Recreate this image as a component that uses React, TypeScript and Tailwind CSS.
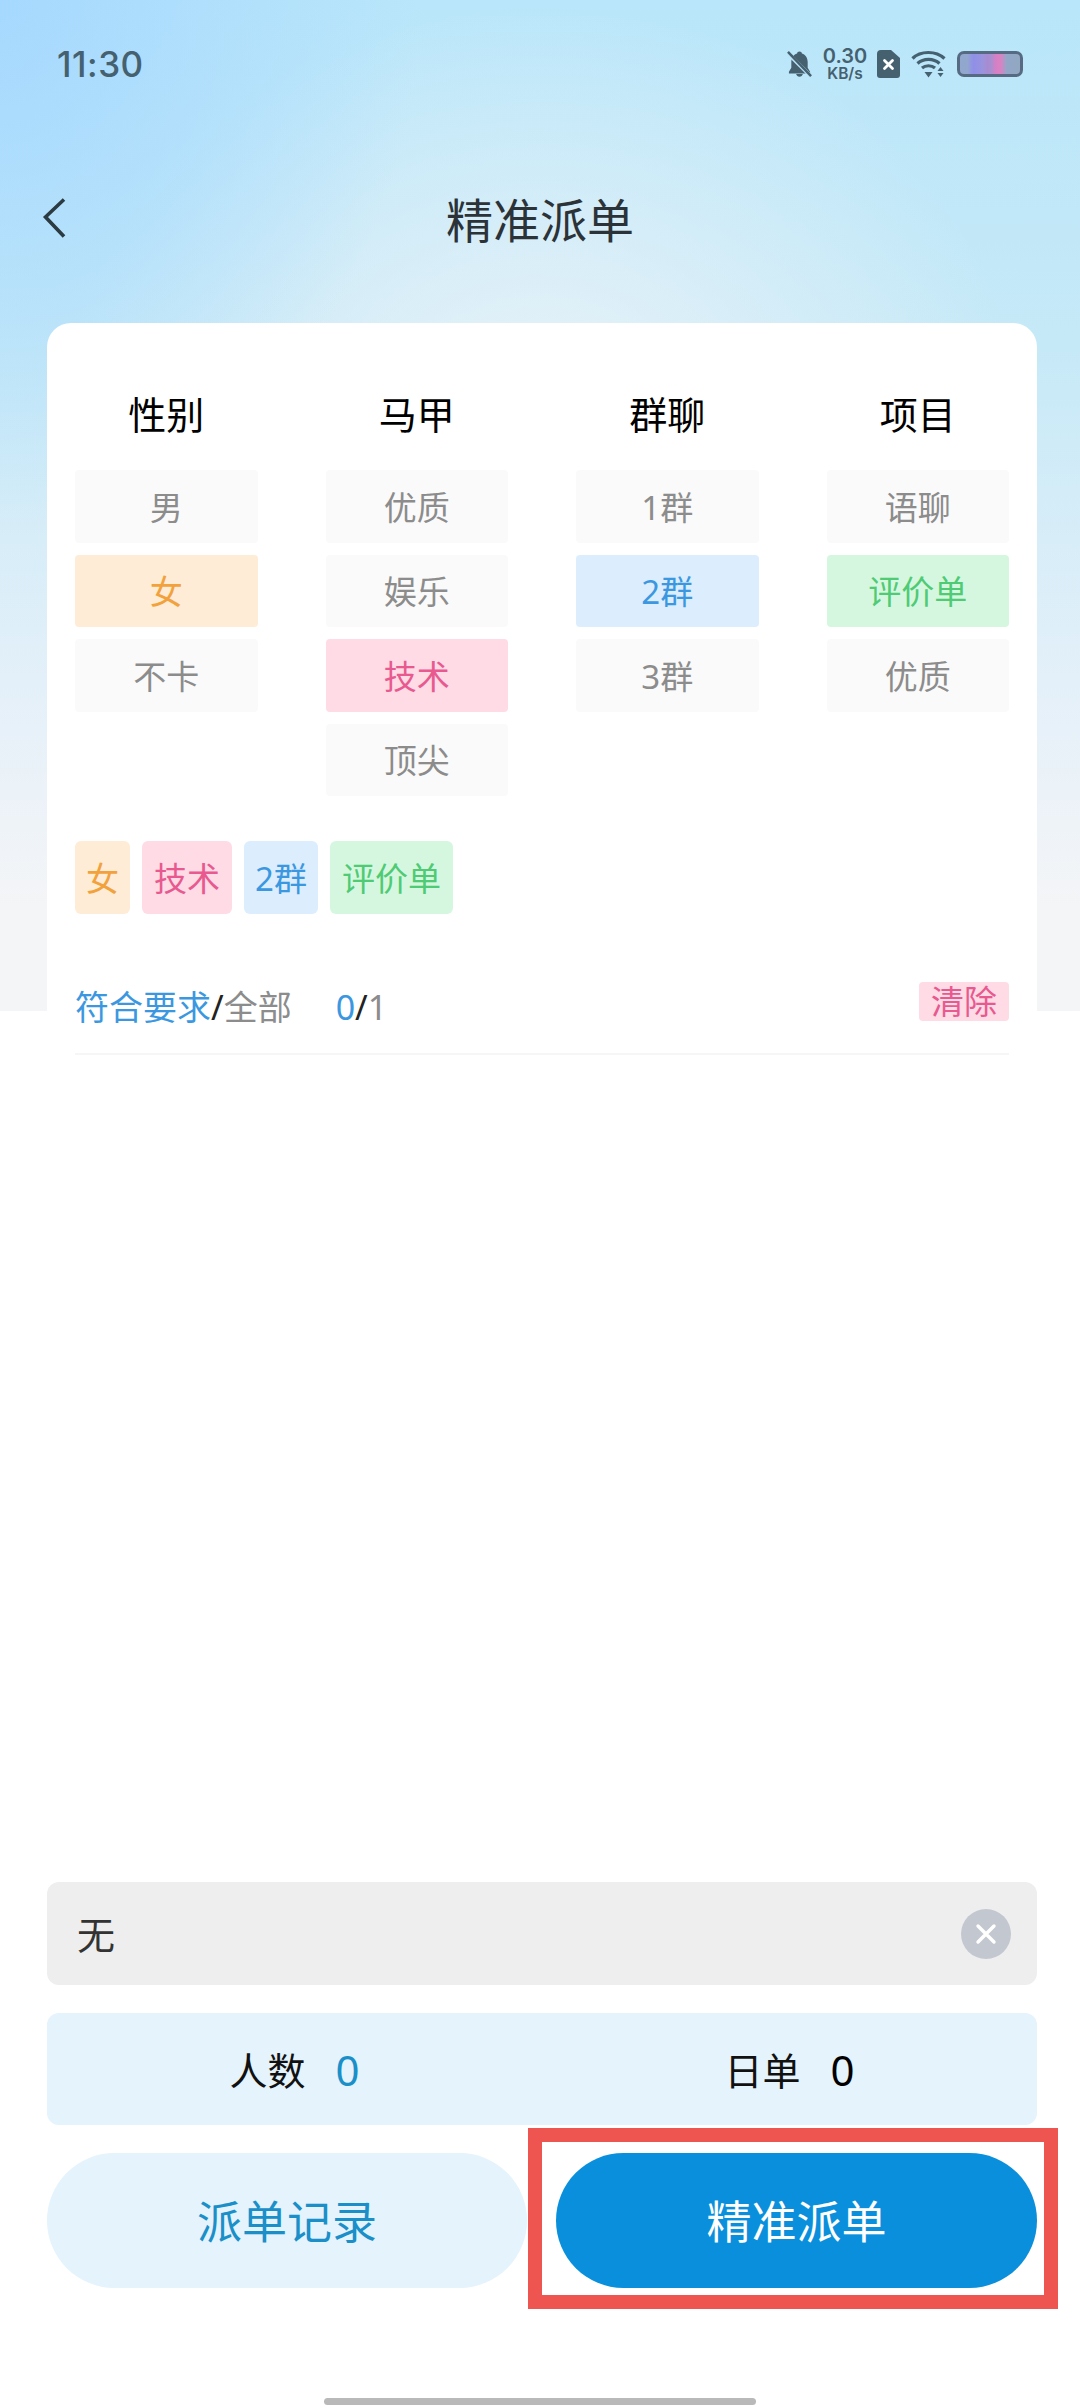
const CJK = "font-['Noto_Sans','Noto_Sans_CJK_SC',sans-serif]";

type Opt = { label: string; on?: string };

const columns: { title: string; items: Opt[] }[] = [
  { title: "性别", items: [{ label: "男" }, { label: "女", on: "bg-[#ffecd6] text-[#f2a23c]" }, { label: "不卡" }] },
  { title: "马甲", items: [{ label: "优质" }, { label: "娱乐" }, { label: "技术", on: "bg-[#ffdbe6] text-[#e8598f]" }, { label: "顶尖" }] },
  { title: "群聊", items: [{ label: "1群" }, { label: "2群", on: "bg-[#dcedfe] text-[#3b98e0]" }, { label: "3群" }] },
  { title: "项目", items: [{ label: "语聊" }, { label: "评价单", on: "bg-[#d6f7df] text-[#4ecb74]" }, { label: "优质" }] },
];

function StatusIcons() {
  return (
    <div className="flex items-center">
      <svg width="25" height="28" viewBox="0 0 26 28" className="mr-[10px]">
        <path d="M13 1c-1.500 0-2.400.9-2.500 2C6.500 4.200 4.500 8 4.500 12v6L2 22v2h22v-2l-2.500-4v-6c0-4-2-7.800-6-9C15.400 1.900 14.500 1 13 1z" fill="#45606f" />
        <path d="M9.500 24.500c.4 1.700 1.800 2.800 3.500 2.800s3.100-1.100 3.500-2.800z" fill="#45606f" />
        <path d="M1 3l24 24" stroke="#b9e5f9" strokeWidth="4" />
        <path d="M1 1.500l24 25" stroke="#45606f" strokeWidth="2.600" />
      </svg>
      <div className="flex w-[46px] flex-col items-center font-['Inter',sans-serif] font-semibold text-[#45606f]">
        <span className="text-[20px] leading-[20px]">0.30</span>
        <span className="text-[15.500px] leading-[16px]">KB/s</span>
      </div>
      <svg width="23" height="28" viewBox="0 0 23 28" className="ml-[9px]">
        <path d="M4 0h10l9 8v17a3 3 0 0 1-3 3H3a3 3 0 0 1-3-3V4a4 4 0 0 1 4-4z" fill="#45606f" />
        <path d="M7.500 10.500l8 8M15.500 10.500l-8 8" stroke="#fff" strokeWidth="2.800" strokeLinecap="round" />
      </svg>
      <svg width="36" height="28" viewBox="0 0 36 28" className="ml-[11px]">
        <g fill="none" stroke="#45606f" strokeWidth="3.200">
          <path d="M1.500 8.500C9.500 .5 25 .5 33.500 8.500" />
          <path d="M6.500 13.500c6-5.500 16-5.500 22 0" />
          <path d="M11 18c3.500-3 9.500-3 13 0" />
        </g>
        <path d="M13.500 22h8l-4 5.500z" fill="#45606f" />
        <path d="M29.500 17l3 4h-6zM29.500 27l3-4h-6z" fill="#45606f" />
      </svg>
      <div className="ml-[10px] h-[26px] w-[66px] rounded-[7px] border-[3px] border-[#566b83] bg-[linear-gradient(90deg,#92a7cd_0%,#92a7cd_12%,#8f8fe8_22%,#9a94dc_38%,#a78bd2_45%,#a88fd0_52%,#d77fc4_60%,#d883c4_68%,#92a7c8_78%,#92a7c0_100%)]" />
    </div>
  );
}

export default function App() {
  return (
    <div
      className={`relative flex h-[2408px] w-[1080px] flex-col overflow-hidden bg-white bg-[radial-gradient(ellipse_420px_520px_at_0%_0%,rgba(165,216,255,0.95)_0%,rgba(165,216,255,0)_100%),radial-gradient(ellipse_480px_420px_at_50%_42%,#e8f2f8_0%,rgba(232,242,248,0)_100%),linear-gradient(180deg,#b9e6fa_0%,#c6e9f7_34%,#e4f0f9_68%,#f4f5f7_90%,#f4f5f7_100%)] bg-[length:100%_1011px] bg-no-repeat ${CJK}`}
    >
      <div className="flex h-[128px] shrink-0 items-center justify-between pl-[57px] pr-[57px]">
        <span className="font-['Inter',sans-serif] text-[35px] font-medium leading-none tracking-[0.5px] text-[#45606f]">11:30</span>
        <StatusIcons />
      </div>

      <div className="relative flex h-[188px] shrink-0 items-center justify-center">
        <svg width="26" height="42" viewBox="0 0 26 42" className="absolute left-[41px] top-[69px]">
          <path d="M23 2.500L4.500 20 23 39.500" fill="none" stroke="#2c3a41" strokeWidth="3.600" />
        </svg>
        <span className="mb-[3px] text-[47px] leading-none text-[#2b3338]">精准派单</span>
      </div>

      <div className="ml-[47px] mt-[7px] w-[990px] shrink-0 rounded-t-[24px] bg-white px-[28px] pt-[62px]">
        <div className="grid grid-cols-4 gap-x-[68px]">
          {columns.map((c) => (
            <div key={c.title} className="flex flex-col gap-[12px]">
              <div className="mb-[13px] h-[60px] text-center text-[38px] leading-[58px] text-black">{c.title}</div>
              {c.items.map((o) => (
                <div
                  key={o.label}
                  className={`flex h-[72.500px] items-center justify-center rounded-[4px] pt-[2px] text-[33px] leading-none ${o.on ?? "bg-[#fafafa] text-[#8c8c8c]"}`}
                >
                  {o.label}
                </div>
              ))}
            </div>
          ))}
        </div>

        <div className="mt-[45px] flex gap-[12px]">
          <span className="flex h-[73px] items-center rounded-[6px] bg-[#ffecd6] px-[11px] pt-[2px] text-[33px] text-[#f2a23c]">女</span>
          <span className="flex h-[73px] items-center rounded-[6px] bg-[#ffdbe6] px-[12px] pt-[2px] text-[33px] text-[#e8598f]">技术</span>
          <span className="flex h-[73px] items-center rounded-[6px] bg-[#dcedfe] px-[11px] pt-[2px] text-[33px] text-[#3b98e0]">2群</span>
          <span className="flex h-[73px] items-center rounded-[6px] bg-[#d6f7df] px-[12px] pt-[2px] text-[33px] text-[#4ecb74]">评价单</span>
        </div>

        <div className="mt-[68px] flex h-[73px] items-start justify-between border-b-[2px] border-[#f6f6f6]">
          <div className="mt-[1px] flex text-[34px] leading-[48px]">
            <span className="text-[#3b98e0]">符合要求</span>
            <span className="text-[#222]">/</span>
            <span className="text-[#8c8c8c]">全部</span>
            <span className="ml-[44px] text-[#3b98e0]">0</span>
            <span className="text-[#222]">/</span>
            <span className="text-[#8c8c8c]">1</span>
          </div>
          <span className="flex h-[39px] w-[90px] items-center justify-center rounded-[4px] bg-[#ffdbe6] text-[33px] leading-none text-[#e8598f]">清除</span>
        </div>
      </div>

      <div className="ml-[47px] mt-auto flex w-[990px] flex-col">
        <div className="flex h-[103px] items-center justify-between rounded-[12px] bg-[#eeeeee] pl-[30px] pr-[26px]">
          <span className="text-[38px] leading-none text-[#333]">无</span>
          <span className="flex h-[50px] w-[50px] items-center justify-center rounded-full bg-[#c3c7cf]">
            <svg width="24" height="24" viewBox="0 0 24 24">
              <path d="M4 4l16 16M20 4L4 20" stroke="#fff" strokeWidth="3.400" strokeLinecap="round" />
            </svg>
          </span>
        </div>
        <div className="mt-[28px] grid h-[112px] grid-cols-2 rounded-[12px] bg-[#e4f3fc]">
          <div className="flex items-center justify-center gap-[30px] pt-[2px] text-[38px] leading-none text-[#111]">
            <span>人数</span>
            <span className="text-[42px] text-[#1a8fc8]">0</span>
          </div>
          <div className="flex items-center justify-center gap-[30px] pt-[2px] text-[38px] leading-none text-[#111]">
            <span>日单</span>
            <span className="text-[42px] text-black">0</span>
          </div>
        </div>
        <div className="mt-[28px] flex justify-between">
          <button className="flex h-[135px] w-[480px] items-center justify-center rounded-full bg-[#e4f3fc] pt-[2px] text-[45px] leading-none text-[#1a8fc8]">派单记录</button>
          <button className="flex h-[135px] w-[481px] items-center justify-center rounded-full bg-[#0a8fdc] pt-[2px] text-[45px] leading-none text-white">精准派单</button>
        </div>
      </div>

      <div className="mb-[3px] ml-[324px] mt-[110px] h-[7px] w-[432px] shrink-0 rounded-full bg-[#b9b9b9]" />

      <div className="absolute left-[528px] top-[2128px] h-[181px] w-[530px] border-[14px] border-[#ee5551]" />
    </div>
  );
}
